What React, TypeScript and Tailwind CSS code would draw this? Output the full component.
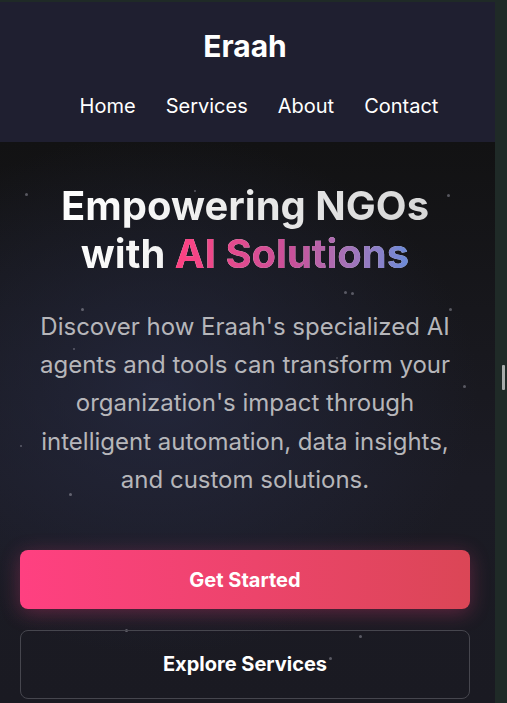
import React from "react";

const dots: { x: number; y: number; s: number; o: number }[] = [
  { x: 25, y: 193, s: 3, o: 0.5 },
  { x: 194, y: 190, s: 2, o: 0.5 },
  { x: 447, y: 194, s: 3, o: 0.5 },
  { x: 344, y: 291, s: 3, o: 0.5 },
  { x: 351, y: 292, s: 3, o: 0.5 },
  { x: 81, y: 308, s: 3, o: 0.55 },
  { x: 449, y: 308, s: 3, o: 0.5 },
  { x: 73, y: 348, s: 2, o: 0.5 },
  { x: 336, y: 357, s: 2, o: 0.4 },
  { x: 379, y: 371, s: 2, o: 0.35 },
  { x: 463, y: 385, s: 3, o: 0.5 },
  { x: 20, y: 445, s: 2, o: 0.5 },
  { x: 69, y: 493, s: 3, o: 0.55 },
  { x: 156, y: 480, s: 2, o: 0.35 },
  { x: 125, y: 629, s: 3, o: 0.55 },
  { x: 359, y: 635, s: 3, o: 0.5 },
  { x: 329, y: 657, s: 3, o: 0.5 },
];

export default function App() {
  return (
    <div
      className="flex h-[703px] w-[507px] overflow-hidden bg-[#1f2a27] pt-[2px]"
      style={{ fontFamily: "Inter, 'Noto Sans', sans-serif" }}
    >
      <div className="relative flex w-[495px] shrink-0 flex-col overflow-hidden">
        <header className="flex h-[140px] flex-col items-center bg-[#1f1f30] pr-[5px] pt-[26px]">
          <div className="text-[30px] font-bold leading-[36px] text-white">Eraah</div>
          <nav className="mt-[27px] flex gap-[30px] pl-[28px] text-[20px] leading-[30px] text-white">
            <a>Home</a>
            <a>Services</a>
            <a>About</a>
            <a>Contact</a>
          </nav>
        </header>
        <section
          className="relative flex-1 pl-5 pr-[25px] pt-[39.5px] text-center"
          style={{
            background:
              "radial-gradient(ellipse 320px 260px at 32% 45%, rgba(38,42,66,0.75), rgba(38,42,66,0) 100%), linear-gradient(180deg, #121213 0%, #17171c 30%, #1b1b24 60%, #1a1a22 100%)",
          }}
        >
          {dots.map((d, i) => (
            <span
              key={i}
              className="absolute rounded-full bg-[#9a9aa6]"
              style={{ left: d.x, top: d.y - 142, width: d.s, height: d.s, opacity: d.o }}
            />
          ))}
          <h1 className="relative mx-auto mb-[30px] w-[390px] bg-linear-to-r from-white to-[#d6d6d6] bg-clip-text text-[40px] font-bold leading-[48px] text-transparent">
            Empowering NGOs with{" "}
            <span className="bg-linear-to-r from-[#ff4081] via-[#c8509a] to-[#6a8cd9] bg-clip-text text-transparent">
              AI Solutions
            </span>
          </h1>
          <p className="relative text-[24px] leading-[38.4px] text-[#b6b6ba]">
            Discover how Eraah's specialized AI agents and tools can transform your organization's impact through intelligent automation, data insights, and custom solutions.
          </p>
          <div className="relative mt-[50px] flex flex-col gap-[21px]">
            <button className="flex h-[59px] items-center justify-center rounded-[8px] bg-linear-to-r from-[#ff4081] to-[#db4656] pt-[2px] text-[20px] font-bold text-white shadow-[0_4px_20px_rgba(255,64,129,0.3)]">
              Get Started
            </button>
            <button className="flex h-[69px] items-center justify-center rounded-[8px] border border-[#46464e] bg-transparent text-[20px] font-bold text-white">
              Explore Services
            </button>
          </div>
        </section>
      </div>
      <div className="relative flex-1">
        <div className="absolute left-[7px] top-[363px] h-[25px] w-[3px] rounded-[1px] bg-[#a8acab]" />
      </div>
    </div>
  );
}
